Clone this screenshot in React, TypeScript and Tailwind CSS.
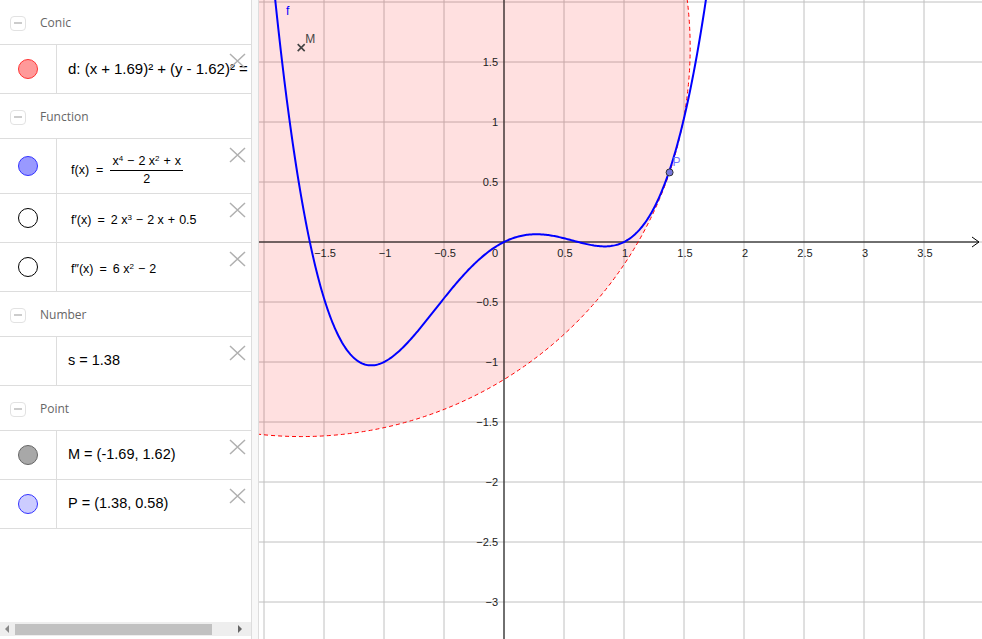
import React from "react";

const math = { fontFamily: '"Liberation Sans", Arial, sans-serif' };
const ui = { fontFamily: '"Open Sans", "Noto Sans", sans-serif' };

// graph coordinates: svg starts at page x=259, origin at page (504, 242), 120px per unit
const OX = 245;
const OY = 242;
const U = 120;
const X = (u: number) => OX + U * u;
const Y = (v: number) => OY - U * v;

function curvePath() {
  const pts: string[] = [];
  for (let i = 0; i <= 400; i++) {
    const u = -2.0 + i * 0.01;
    const v = (u ** 4 - 2 * u ** 2 + u) / 2;
    const y = Math.max(-40, Math.min(700, Y(v)));
    pts.push(`${i === 0 ? "M" : "L"}${X(u).toFixed(2)},${y.toFixed(2)}`);
  }
  return pts.join(" ");
}

function CloseIcon() {
  return (
    <svg
      className="absolute right-[5px] top-[8px]"
      width="17"
      height="16"
      viewBox="0 0 17 16"
    >
      <path d="M1 1 L16 15 M16 1 L1 15" stroke="#b0b0b0" strokeWidth="1.5" />
    </svg>
  );
}

function Header({ label }: { label: string }) {
  return (
    <div className="flex h-[45px] items-center border-b border-[#dddddd] pt-[2px]">
      <div className="ml-[10px] flex h-[15px] w-[16px] items-center justify-center rounded-[4px] border border-[#e2e2e2]">
        <div className="h-[1.5px] w-[8px] bg-[#cccccc]" />
      </div>
      <span className="ml-[14px] text-[12px] text-[#666666]" style={ui}>
        {label}
      </span>
    </div>
  );
}

function Row({
  marker,
  h = "h-[49px]",
  children,
}: {
  marker?: { fill: string; stroke: string };
  h?: string;
  children: React.ReactNode;
}) {
  return (
    <div className={`relative flex border-b border-[#dddddd] ${h}`}>
      <div className="flex w-[57px] shrink-0 items-center justify-center border-r border-[#dddddd]">
        {marker && (
          <div
            className="h-[20px] w-[20px] rounded-full border"
            style={{ background: marker.fill, borderColor: marker.stroke }}
          />
        )}
      </div>
      <div
        className="flex min-w-0 flex-1 items-center overflow-hidden whitespace-nowrap pl-[11px] text-black"
        style={math}
      >
        {children}
      </div>
      <CloseIcon />
    </div>
  );
}

const Op = ({ c }: { c: string }) => <span className="mx-[4px]">{c}</span>;

function AlgebraView() {
  return (
    <div className="flex h-full w-[252px] shrink-0 flex-col border-r border-[#dddddd] bg-white">
      <div className="flex-1">
        <Header label="Conic" />
        <Row marker={{ fill: "#ff9999", stroke: "#ff3333" }}>
          <span className="text-[15px]">
            d: (x<Op c="+" />1.69)²<Op c="+" />(y - 1.62)²<Op c="=" />10.51
          </span>
        </Row>
        <Header label="Function" />
        <Row marker={{ fill: "#9999ff", stroke: "#3333ff" }} h="h-[55px]">
          <div className="flex items-center pl-[3px] pt-[8px] text-[12.5px]">
            <span>f(x)</span>
            <span className="mx-[7px]">=</span>
            <div className="flex flex-col items-center leading-[15px]">
              <span className="border-b border-black px-[2px] pb-[1px]">
                x<sup className="text-[8px]">4</sup>
                <Op c="−" />2 x<sup className="text-[8px]">2</sup>
                <Op c="+" />x
              </span>
              <span className="pt-[1px]">2</span>
            </div>
          </div>
        </Row>
        <Row marker={{ fill: "#ffffff", stroke: "#000000" }}>
          <span className="pl-[3px] pt-[4px] text-[12.5px]">
            f′(x)<span className="mx-[6px]">=</span>2 x
            <sup className="text-[8px]">3</sup>
            <Op c="−" />2 x<Op c="+" />0.5
          </span>
        </Row>
        <Row marker={{ fill: "#ffffff", stroke: "#000000" }}>
          <span className="pl-[3px] pt-[4px] text-[12.5px]">
            f″(x)<span className="mx-[6px]">=</span>6 x
            <sup className="text-[8px]">2</sup>
            <Op c="−" />2
          </span>
        </Row>
        <Header label="Number" />
        <Row>
          <span className="text-[14.5px]">
            s<span className="mx-[4px]">=</span>1.38
          </span>
        </Row>
        <Header label="Point" />
        <Row marker={{ fill: "#a8a8a8", stroke: "#666666" }}>
          <span className="text-[14.5px]">
            M<span className="mx-[4px]">=</span>(-1.69, 1.62)
          </span>
        </Row>
        <Row marker={{ fill: "#ccccff", stroke: "#3333ff" }}>
          <span className="text-[14.5px]">
            P<span className="mx-[4px]">=</span>(1.38, 0.58)
          </span>
        </Row>
      </div>
      <div className="mb-[3px] flex h-[14px] items-center bg-[#eeeeee]">
        <svg width="15" height="14" viewBox="0 0 15 14">
          <path d="M9 3 L5 7 L9 11 Z" fill="#888888" />
        </svg>
        <div className="h-[11px] w-[197px] bg-[#c1c1c1]" />
        <div className="flex-1" />
        <svg width="10" height="14" viewBox="0 0 10 14">
          <path d="M1 3 L5 7 L1 11 Z" fill="#666666" />
        </svg>
        <div className="w-[4px]" />
      </div>
    </div>
  );
}

function GraphView() {
  const vx: number[] = [];
  for (let k = -4; k <= 7; k++) vx.push(OX + 60 * k);
  const hy: number[] = [];
  for (let k = -4; k <= 6; k++) hy.push(OY + 60 * k);

  const xLabels: [number, string][] = [
    [-1.5, "−1.5"],
    [-1, "−1"],
    [-0.5, "−0.5"],
    [0.5, "0.5"],
    [1, "1"],
    [1.5, "1.5"],
    [2, "2"],
    [2.5, "2.5"],
    [3, "3"],
    [3.5, "3.5"],
  ];
  const yLabels: [number, string][] = [
    [1.5, "1.5"],
    [1, "1"],
    [0.5, "0.5"],
    [-0.5, "−0.5"],
    [-1, "−1"],
    [-1.5, "−1.5"],
    [-2, "−2"],
    [-2.5, "−2.5"],
    [-3, "−3"],
  ];

  const cx = X(-1.69);
  const cy = Y(1.62);
  const r = U * Math.sqrt(3.07 ** 2 + 1.04 ** 2);

  return (
    <div className="relative flex-1 overflow-hidden bg-white">
      <svg width="723" height="639" viewBox="0 0 723 639" style={math}>
        {vx.map((x) => (
          <line key={"v" + x} x1={x} y1={0} x2={x} y2={639} stroke="#c0c0c0" strokeWidth="1" />
        ))}
        {hy.map((y) => (
          <line key={"h" + y} x1={0} y1={y} x2={723} y2={y} stroke="#c0c0c0" strokeWidth="1" />
        ))}
        <circle cx={cx} cy={cy} r={r} fill="rgba(255,0,0,0.12)" />
        {/* axes */}
        <line x1={0} y1={OY} x2={720} y2={OY} stroke="#000" strokeWidth="1" />
        <path d={`M713 ${OY - 5} L720 ${OY} L713 ${OY + 5}`} fill="none" stroke="#000" strokeWidth="1" />
        <line x1={OX} y1={0} x2={OX} y2={639} stroke="#000" strokeWidth="1" />
        {xLabels.map(([u, t]) => (
          <text key={"xl" + t} x={X(u) + 1} y={OY + 15} fontSize="11" textAnchor="middle" fill="#222">
            {t}
          </text>
        ))}
        <text x={OX - 6} y={OY + 15} fontSize="11" textAnchor="end" fill="#222">
          0
        </text>
        {yLabels.map(([v, t]) => (
          <text key={"yl" + t} x={OX - 6} y={Y(v) + 4} fontSize="11" textAnchor="end" fill="#222">
            {t}
          </text>
        ))}
        <circle cx={cx} cy={cy} r={r} fill="none" stroke="#ff0000" strokeWidth="1" strokeDasharray="4 3" />
        <path d={curvePath()} fill="none" stroke="#0000ff" strokeWidth="2" />
        <text x={27} y={15} fontSize="12" fill="#0000ff">
          f
        </text>
        <path
          d={`M${cx - 3.5} ${cy - 3.5} L${cx + 3.5} ${cy + 3.5} M${cx + 3.5} ${cy - 3.5} L${cx - 3.5} ${cy + 3.5}`}
          stroke="#444"
          strokeWidth="1.6"
        />
        <text x={cx + 4} y={cy - 5} fontSize="12" fill="#444">
          M
        </text>
        <circle cx={X(1.38)} cy={Y(0.58)} r="3.5" fill="#7777dd" stroke="#333" strokeWidth="1" />
        <text x={X(1.38) + 3} y={Y(0.58) - 6} fontSize="12" fill="#7777ff">
          P
        </text>
      </svg>
    </div>
  );
}

export default function App() {
  return (
    <div className="flex h-[639px] w-[982px] overflow-hidden bg-white">
      <AlgebraView />
      <div className="w-[7px] shrink-0 border-r border-[#dddddd] bg-[#f8f8f8]" />
      <GraphView />
    </div>
  );
}
